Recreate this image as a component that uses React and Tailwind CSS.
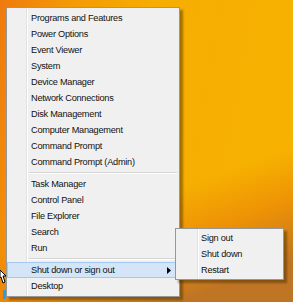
import React from "react";

const mainItems1 = [
  "Programs and Features",
  "Power Options",
  "Event Viewer",
  "System",
  "Device Manager",
  "Network Connections",
  "Disk Management",
  "Computer Management",
  "Command Prompt",
  "Command Prompt (Admin)",
];
const mainItems2 = ["Task Manager", "Control Panel", "File Explorer", "Search", "Run"];

function Item({ label }) {
  return (
    <div className="h-[16px] flex items-center pt-[2px] pl-[24px] text-[#111]">{label}</div>
  );
}

function Separator() {
  return (
    <div className="h-[6px] flex flex-col justify-center pl-[22px] pr-[2px]">
      <div className="h-px bg-[#d5d5d5]" />
      <div className="h-px bg-white" />
    </div>
  );
}

export default function App() {
  return (
    <div
      className="relative w-[293px] h-[302px] overflow-hidden bg-[linear-gradient(100deg,#ef7a0e_0%,#f39a06_20%,#f6ad02_45%,#f7b300_100%)] text-[9.2px] tracking-[-0.25px] leading-none"
      style={{ fontFamily: '"Liberation Sans", Arial, sans-serif' }}
    >
      {/* darker lower-right band */}
      <div className="absolute inset-0 bg-[linear-gradient(160deg,rgba(0,0,0,0)_62%,rgba(230,120,10,0.55)_75%,rgba(185,110,40,0.9)_90%)]" />

      {/* cursor and taskbar hint at bottom-left */}
      <svg className="absolute left-0 top-[270px]" width="8" height="20" viewBox="0 0 8 20">
        <polygon points="0,0 6,6 3,6 5,12 3,13 1,7 0,8" fill="#fff" stroke="#000" strokeWidth="1" />
      </svg>
      <div className="absolute left-[3px] top-[290px] w-[3px] h-[9px] bg-[#2a9fd8]" />

      {/* main menu */}
      <div className="absolute left-[6px] top-[7px] w-[174px] h-[290px] bg-[#f0f0f0] border border-[#979797] shadow-[3px_3px_2px_rgba(60,40,0,0.45)] pt-[1px]">
        <div className="absolute left-[19px] top-0 bottom-0 w-px bg-[#e2e2e2]" />
        <div className="absolute left-[20px] top-0 bottom-0 w-px bg-white" />
        <div className="relative flex flex-col pt-[1px]">
          {mainItems1.map((l) => (
            <Item key={l} label={l} />
          ))}
          <Separator />
          {mainItems2.map((l) => (
            <Item key={l} label={l} />
          ))}
          <Separator />
          <div className="h-[16px] flex items-center pt-[1px] pl-[23px] pr-[7px] bg-[#d3e5f7] border border-[#a3c9ee] text-[#111]">
            <span className="flex-1">Shut down or sign out</span>
            <svg width="4" height="7" viewBox="0 0 4 7">
              <polygon points="0,0 4,3.5 0,7" fill="#000" />
            </svg>
          </div>
          <Item label="Desktop" />
        </div>
      </div>

      {/* submenu */}
      <div className="absolute left-[175px] top-[228px] w-[109px] h-[52px] bg-[#f0f0f0] border border-[#979797] shadow-[3px_3px_2px_rgba(60,40,0,0.45)]">
        <div className="absolute left-[21px] top-0 bottom-0 w-px bg-[#e2e2e2]" />
        <div className="absolute left-[22px] top-0 bottom-0 w-px bg-white" />
        <div className="relative flex flex-col pt-[1px]">
          {["Sign out", "Shut down", "Restart"].map((l) => (
            <div key={l} className="h-[16px] flex items-center pt-[2px] pl-[25px] text-[#111]">
              {l}
            </div>
          ))}
        </div>
      </div>
    </div>
  );
}
